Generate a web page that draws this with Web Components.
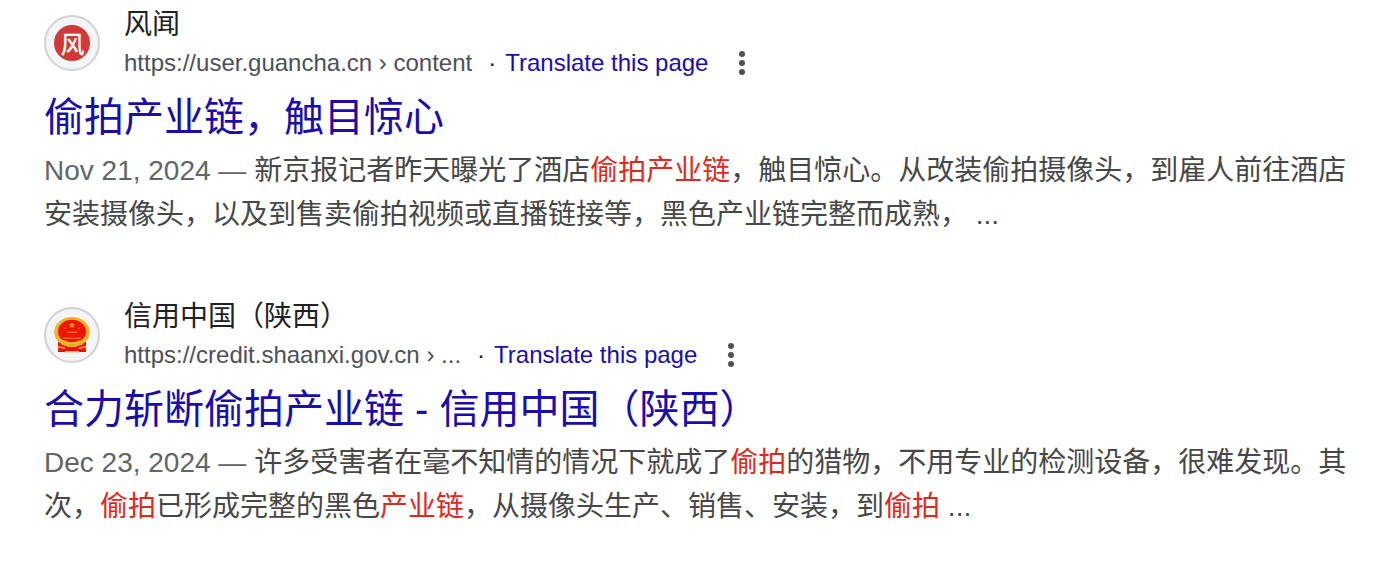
<!DOCTYPE html>
<html lang="en"><head><meta charset="utf-8"><title>Search results</title>
<style>
body{margin:0;background:#fff;font-family:"Liberation Sans","Noto Sans CJK SC",sans-serif}
em{font-style:normal;color:#dc2a20}
.disc{display:block;width:36px;height:36px;border-radius:50%;background:#cf3a39;color:#fff;font:500 24px/35px "Noto Sans CJK SC",sans-serif;text-align:center;text-indent:1px}
</style></head><body>
<search-results>
<search-result>
<site-icon slot="icon"><span class="disc">风</span></site-icon>
<span slot="site">风闻</span><span slot="url">https://user.guancha.cn › content</span>
<span slot="title">偷拍产业链，触目惊心</span>
<span slot="date">Nov 21, 2024</span>
<span slot="text">新京报记者昨天曝光了酒店<em>偷拍产业链</em>，触目惊心。从改装偷拍摄像头，到雇人前往酒店<br>安装摄像头，以及到售卖偷拍视频或直播链接等，黑色产业链完整而成熟， ...</span>
</search-result>
<search-result>
<site-icon slot="icon"><svg viewBox="0 0 36 36" width="36" height="36"><g style="filter:blur(.45px)">
<path d="M4 25h28v10H4z" fill="#f01408"/>
<ellipse cx="18" cy="15" rx="17.8" ry="15" fill="#eeb42c"/>
<ellipse cx="18" cy="14.5" rx="14" ry="11.8" fill="#f01408"/>
<path d="M18 5l1 2.2 2.4.1-1.9 1.5.7 2.3-2.2-1.3-2.2 1.3.7-2.3-1.9-1.5 2.4-.1z" fill="#f0a020"/>
<path d="M10 11l2-1v2zM26 11l-2-1v2z" fill="#e87812"/><path d="M13 14.5h10v1.5H13zM9 20.5h18v1.5H9z" fill="#df6c10"/>
<path d="M5 23q7 0 10 2h6q3-2 10-2l-3 5-7-1q-3 3-6 0l-7 1z" fill="#efb52a"/>
<path d="M15 27h6l2 3H13z" fill="#eca822"/>
<path d="M4 29l7 1v2l-7-1zM32 29l-7 1v2l7-1z" fill="#ed8d32"/>
<path d="M11 34h14v1.5H11z" fill="#f1ba66"/>
</g></svg></site-icon>
<span slot="site">信用中国（陕西）</span><span slot="url">https://credit.shaanxi.gov.cn › ...</span>
<span slot="title">合力斩断偷拍产业链 - 信用中国（陕西）</span>
<span slot="date">Dec 23, 2024</span>
<span slot="text">许多受害者在毫不知情的情况下就成了<em>偷拍</em>的猎物，不用专业的检测设备，很难发现。其<br>次，<em>偷拍</em>已形成完整的黑色<em>产业链</em>，从摄像头生产、销售、安装，到<em>偷拍</em> ...</span>
</search-result>
</search-results>
<script>
const define=(name,html)=>customElements.define(name,class extends HTMLElement{constructor(){super();this.attachShadow({mode:'open'}).innerHTML=html}});
define('search-results','<style>:host{display:flex;flex-direction:column;gap:56px;padding:4px 0 0 44px}</style><slot></slot>');
define('site-icon','<style>:host{display:flex;box-sizing:border-box;width:56px;height:56px;border:2px solid #d2d2d5;border-radius:50%;background:#f3f5f6;align-items:center;justify-content:center}</style><slot></slot>');
define('more-button','<style>:host{display:block;width:6px;height:24px}svg{display:block}</style><svg width="6" height="24" fill="#4d5156"><circle cx="3" cy="3" r="3"/><circle cx="3" cy="12" r="3"/><circle cx="3" cy="21" r="3"/></svg>');
define('search-result',`<style>
:host{display:block;height:236px;white-space:nowrap}
header{display:flex;align-items:center;gap:24px;height:78px}
.site{font-size:28px;line-height:42px;height:40px;color:#202124}
.line{display:flex;align-items:center;font-size:24px;line-height:38px;height:38px;color:#4d5156}
.dot{color:#202124;margin:0 9px 0 16px}.tr{color:#1a0dab;margin-right:31px}
h3{margin:9px 0 0;font-size:40px;line-height:52px;height:52px;font-weight:400;color:#1a0dab}
p{margin:6px 0 0;font-size:28px;line-height:44px;color:#474747}.date{color:#626569}
</style><header><slot name="icon"></slot><div><div class="site"><slot name="site"></slot></div><div class="line"><slot name="url"></slot><span class="dot">·</span><span class="tr">Translate this page</span><more-button></more-button></div></div></header><h3><slot name="title"></slot></h3><p><span class="date"><slot name="date"></slot> — </span><slot name="text"></slot></p>`);
</script></body></html>
